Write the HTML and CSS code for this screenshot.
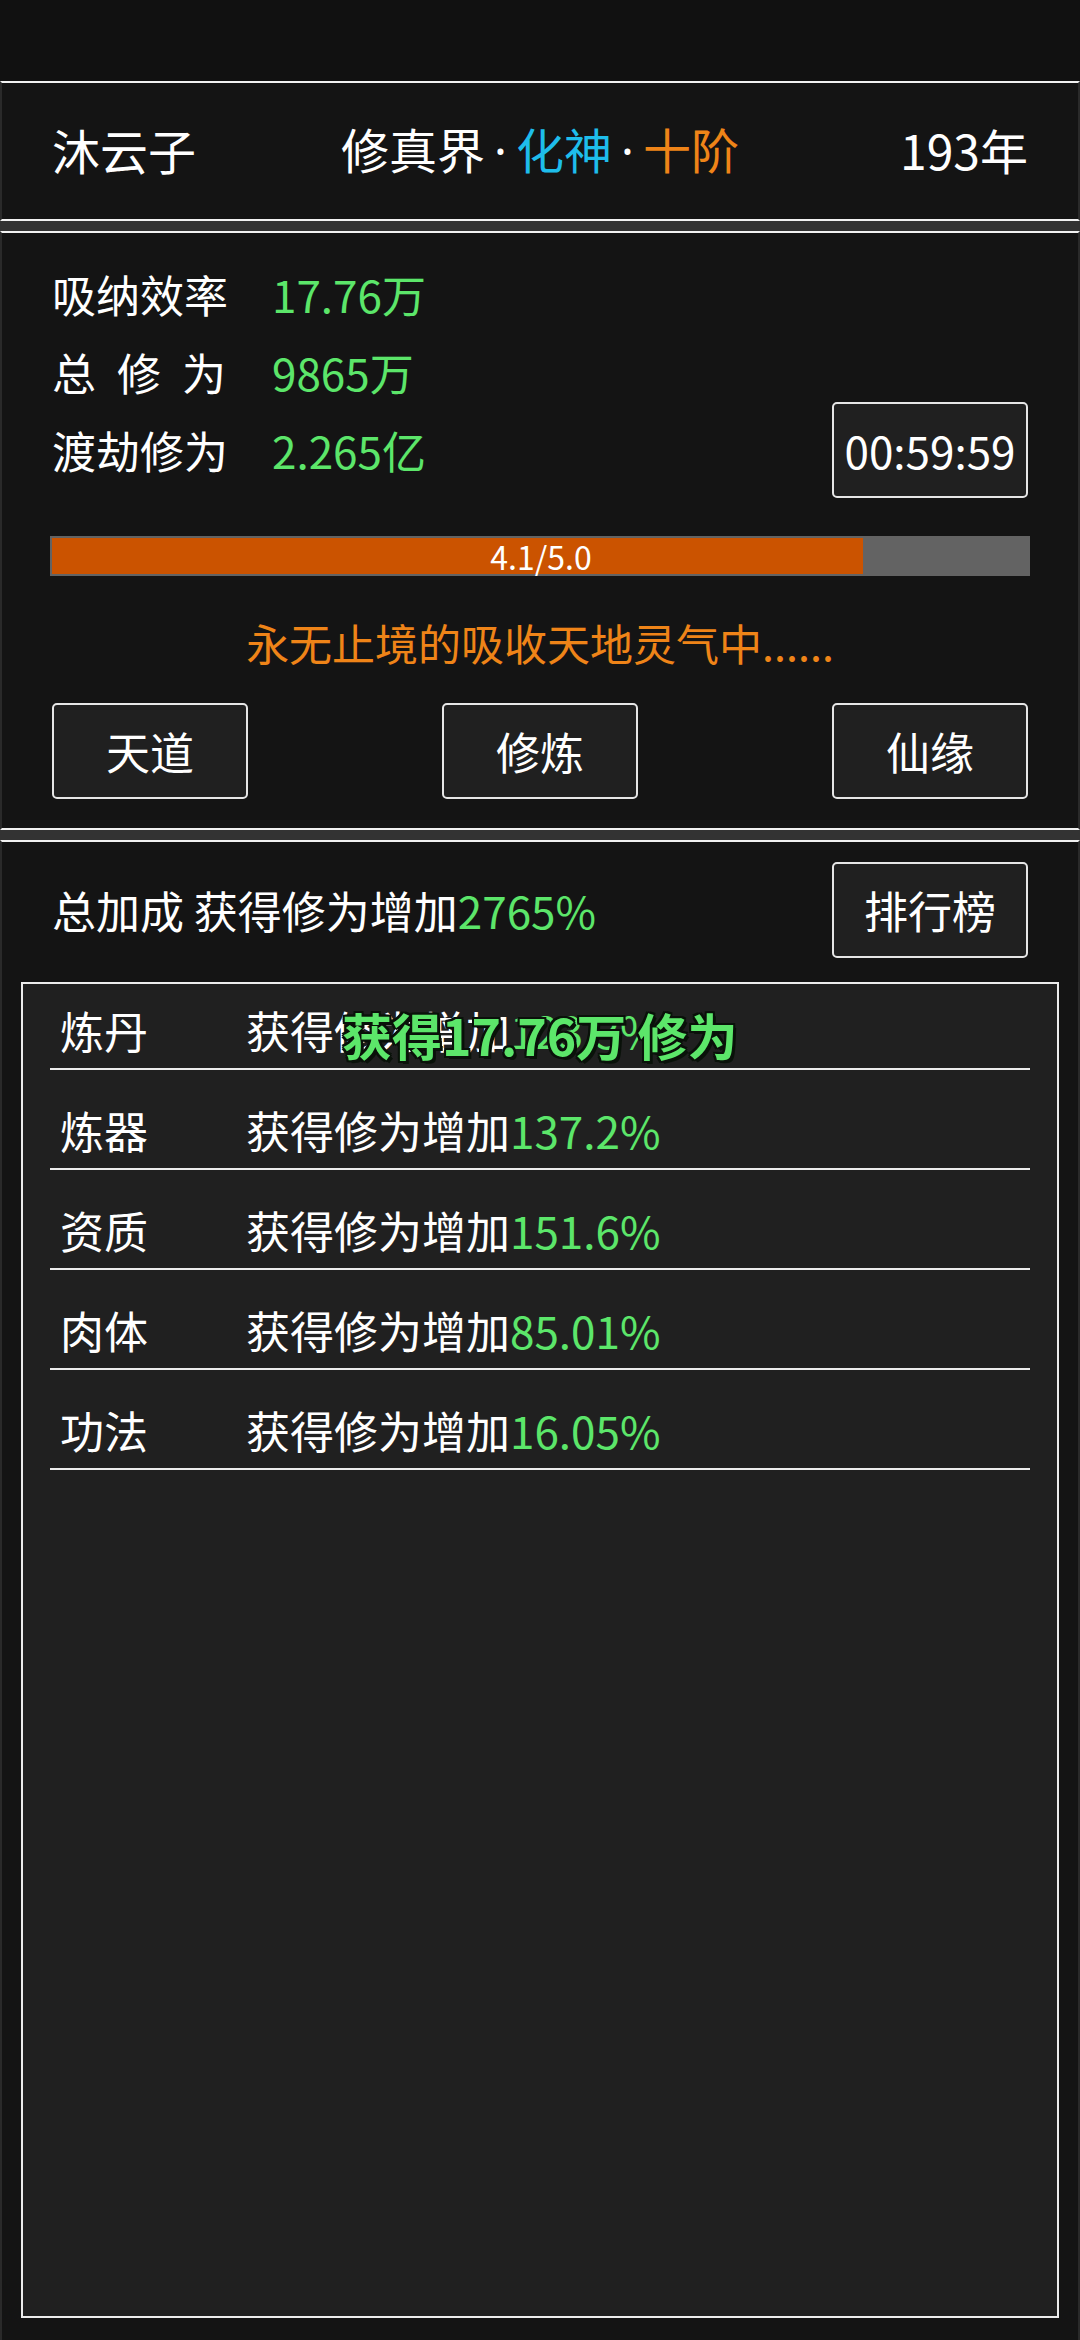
FILE: index.html
```html
<!DOCTYPE html>
<html lang="zh-CN">
<head>
<meta charset="utf-8">
<title>修真界</title>
<link rel="stylesheet" href="styles.css">
</head>
<body>
<div class="screen">
  <div class="statusbar"></div>

  <header class="panel header">
    <div class="name">沐云子</div>
    <div class="realm">修真界<span class="dot">·</span><span class="cyan">化神</span><span class="dot">·</span><span class="orange">十阶</span></div>
    <div class="age">193年</div>
  </header>

  <section class="panel main">
    <div class="stats">
      <div class="label">吸纳效率</div>
      <div class="value">17.76万</div>
      <div class="label spaced">总修为</div>
      <div class="value">9865万</div>
      <div class="label">渡劫修为</div>
      <div class="value">2.265亿</div>
      <div class="box timer">00:59:59</div>
    </div>

    <div class="bar">
      <div class="fill" style="width:82.9%"></div>
      <div class="bar-text">4.1/5.0</div>
    </div>

    <div class="status">永无止境的吸收天地灵气中......</div>

    <div class="actions">
      <div class="box btn">天道</div>
      <div class="box btn">修炼</div>
      <div class="box btn">仙缘</div>
    </div>
  </section>

  <section class="panel bonus">
    <div class="bonus-head">
      <div class="total">总加成 获得修为增加<span class="green">2765%</span></div>
      <div class="box btn">排行榜</div>
    </div>

    <div class="list">
      <div class="row first"><span class="row-label">炼丹</span><span class="row-desc">获得修为增加<span class="green">123.3%</span></span></div>
      <div class="row"><span class="row-label">炼器</span><span class="row-desc">获得修为增加<span class="green">137.2%</span></span></div>
      <div class="row"><span class="row-label">资质</span><span class="row-desc">获得修为增加<span class="green">151.6%</span></span></div>
      <div class="row"><span class="row-label">肉体</span><span class="row-desc">获得修为增加<span class="green">85.01%</span></span></div>
      <div class="row"><span class="row-label">功法</span><span class="row-desc">获得修为增加<span class="green">16.05%</span></span></div>
      <div class="toast">获得17.76万 修为</div>
    </div>
  </section>
</div>
</body>
</html>
```

FILE: styles.css
```css
* {
  box-sizing: border-box;
}

html, body {
  margin: 0;
  padding: 0;
  background: #333333;
}

body {
  font-family: "Noto Sans CJK SC", "Noto Sans", sans-serif;
  color: #ffffff;
}

.screen {
  width: 1080px;
  height: 2340px;
  display: flex;
  flex-direction: column;
  overflow: hidden;
}

.statusbar {
  height: 81px;
  background: #111111;
  flex: none;
}

.panel {
  background: #141414;
  border-top: 2px solid #f2f2f2;
  border-bottom: 2px solid #f2f2f2;
  border-left: 2px solid #2a2a2a;
  border-right: 2px solid #2a2a2a;
  flex: none;
}

/* ---------- header ---------- */
.header {
  height: 140px;
  display: grid;
  grid-template-columns: 1fr auto 1fr;
  align-items: center;
  padding: 0 50px 4px;
  font-size: 48px;
  line-height: 1;
}

.name {
  justify-self: start;
}

.realm {
  justify-self: center;
  white-space: nowrap;
}

.age {
  justify-self: end;
}

.dot {
  color: #ffffff;
  font-family: "Noto Sans", sans-serif;
  margin: 0 9px;
}

.cyan {
  color: #1ebdeb;
}

.orange {
  color: #ef8418;
}

.green {
  color: #5ce66a;
}

/* ---------- main panel ---------- */
.main {
  margin-top: 10px;
  padding: 22px 50px 29px;
}

.stats {
  display: grid;
  grid-template-columns: 220px 1fr auto;
  grid-template-rows: repeat(3, 78px);
  align-items: center;
  font-size: 44px;
  line-height: 1;
}

.label {
  grid-column: 1;
  white-space: nowrap;
}

.label.spaced {
  letter-spacing: 21px;
}

.value {
  grid-column: 2;
  color: #5ce66a;
}

.box {
  width: 196px;
  height: 96px;
  border: 2px solid #e6e6e6;
  border-radius: 5px;
  background: #202020;
  display: flex;
  align-items: center;
  justify-content: center;
  font-size: 44px;
  line-height: 1;
  color: #ffffff;
}

.timer {
  grid-column: 3;
  grid-row: 3;
}

.bar {
  margin: 47px -2px 0;
  height: 40px;
  background: #636363;
  display: grid;
  padding: 2px 0 2px 2px;
}

.fill {
  grid-area: 1 / 1;
  background: #cb5300;
  height: 100%;
}

.bar-text {
  grid-area: 1 / 1;
  justify-self: center;
  align-self: center;
  font-size: 32px;
  line-height: 1;
  color: #ffffff;
}

.status {
  margin-top: 36px;
  height: 60px;
  line-height: 60px;
  font-size: 43px;
  text-align: center;
  color: #ef8418;
  white-space: nowrap;
}

.actions {
  margin-top: 31px;
  display: flex;
  justify-content: space-between;
}

/* ---------- bonus panel ---------- */
.bonus {
  margin-top: 10px;
  flex: 1;
  border-bottom: none;
  display: flex;
  flex-direction: column;
  padding: 20px 19px 22px;
}

.bonus-head {
  display: flex;
  align-items: center;
  justify-content: space-between;
  padding: 0 31px;
  font-size: 44px;
  line-height: 1;
}

.total {
  white-space: nowrap;
}

.list {
  position: relative;
  margin-top: 24px;
  flex: 1;
  border: 2px solid #ececec;
  background: #202020;
  padding: 0 27px;
}

.row {
  display: flex;
  align-items: center;
  padding: 22px 0 0 10px;
  height: 100px;
  border-bottom: 2px solid #ececec;
  font-size: 44px;
  line-height: 76px;
}

.row.first {
  padding-top: 8px;
  height: 86px;
}

.row-label {
  width: 186px;
  flex: none;
}

.row-desc {
  white-space: nowrap;
}

.toast {
  position: absolute;
  left: 319px;
  top: 23px;
  font-size: 50px;
  line-height: 54px;
  font-weight: bold;
  color: #5ce66a;
  white-space: nowrap;
  text-shadow:
    2px 0 0 #0a120a, -2px 0 0 #0a120a, 0 2px 0 #0a120a, 0 -2px 0 #0a120a,
    2px 2px 0 #0a120a, -2px -2px 0 #0a120a, 2px -2px 0 #0a120a, -2px 2px 0 #0a120a,
    3px 3px 0 #0a120a;
}
```
